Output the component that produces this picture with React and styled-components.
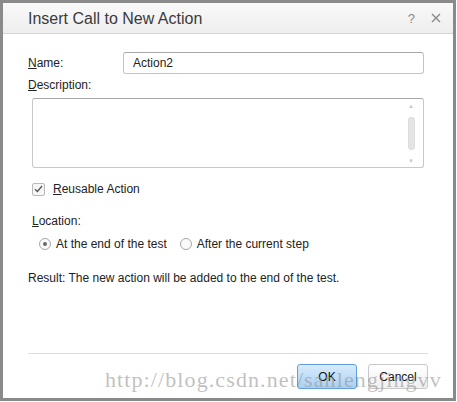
import styled, { createGlobalStyle } from "styled-components";

const Global = createGlobalStyle`
  html, body { margin: 0; padding: 0; background: #ffffff; }
  body { font-family: "Liberation Sans", Arial, sans-serif; font-size: 12px; color: #222; }
`;

const Dialog = styled.div`
  position: relative;
  width: 450px;
  height: 395px;
  border: 3px solid #8a8a8a;
  background: #ffffff;
  display: flex;
  flex-direction: column;
`;

const TitleBar = styled.div`
  height: 30px;
  display: flex;
  align-items: center;
  padding: 0 12px 0 25px;
  background: linear-gradient(#f9f9f9, #eeeeee);
  border-bottom: 1px solid #d4d4d4;
`;

const Title = styled.div`
  flex: 1;
  font-size: 16px;
  color: #3a3a3a;
  padding-top: 1px;
`;

const TitleButton = styled.span`
  display: inline-flex;
  align-items: center;
  color: #8a8a8a;
  font-size: 13px;
  margin-left: 16px;
`;

const Body = styled.div`
  flex: 1;
  display: flex;
  flex-direction: column;
  padding: 18px 29px 0 25px;
`;

const Row = styled.div`
  display: flex;
  align-items: center;
  margin-top: ${(p) => p.$mt || 0}px;
  margin-bottom: ${(p) => p.$mb || 0}px;
  padding-left: ${(p) => p.$indent || 0}px;
`;

const Label = styled.label`
  width: 95px;
  color: #222;
  padding-left: ${(p) => p.$indent || 0}px;
`;

const Input = styled.div`
  flex: 1;
  height: 20px;
  border: 1px solid #c4c4c4;
  border-top-color: #a8a8a8;
  border-radius: 3px;
  display: flex;
  align-items: center;
  padding-left: 9px;
`;

const TextArea = styled.div`
  margin: 6px 0 0 4px;
  height: 68px;
  border: 1px solid #c8c8c8;
  border-top-color: #a8a8a8;
  border-radius: 3px;
  display: flex;
  justify-content: flex-end;
`;

const Scroll = styled.div`
  width: 12px;
  margin-right: 6px;
  display: flex;
  flex-direction: column;
  align-items: center;
  justify-content: space-between;
  padding: 4px 0 3px;
  color: #c8c8c8;
  font-size: 6px;
`;

const Thumb = styled.div`
  width: 5px;
  height: 31px;
  border-radius: 3px;
  background: #e4e4e4;
  border: 1px solid #dcdcdc;
`;

const Check = styled.span`
  width: 11px;
  height: 11px;
  border: 1px solid #b8b8b8;
  border-radius: 2px;
  background: #f6f6f6;
  display: inline-flex;
  align-items: center;
  justify-content: center;
  margin: 0 8px 0 4px;
`;

const Radio = styled.span`
  width: 10px;
  height: 10px;
  border-radius: 50%;
  border: 1px solid #a8a8a8;
  background: #fafafa;
  display: inline-flex;
  align-items: center;
  justify-content: center;
  margin-right: 5px;
  &::after {
    content: "";
    width: 4px;
    height: 4px;
    border-radius: 50%;
    background: ${(p) => (p.$on ? "#666" : "transparent")};
  }
`;

const RadioItem = styled.span`
  display: inline-flex;
  align-items: center;
  margin-right: 13px;
`;

const Footer = styled.div`
  margin: 0 25px 0 25px;
  border-top: 1px solid #dedede;
  padding: 10px 0 9px;
  display: flex;
  justify-content: flex-end;
  gap: 11px;
`;

const Button = styled.button`
  width: 60px;
  height: 25px;
  font-family: "Liberation Sans", Arial, sans-serif;
  font-size: 12px;
  color: #111;
  border-radius: 3px;
  border: 1px solid ${(p) => (p.$primary ? "#5f9fdc" : "#c8c8c8")};
  background: ${(p) =>
    p.$primary ? "linear-gradient(#d8ebfb, #a9d0f3)" : "linear-gradient(#ffffff, #f0f0f0)"};
  padding: 0;
`;

const Watermark = styled.div`
  position: absolute;
  left: 102px;
  top: 364px;
  font-family: "Liberation Serif", "Times New Roman", serif;
  font-size: 22px;
  letter-spacing: 1.1px;
  color: rgba(150, 150, 150, 0.6);
  pointer-events: none;
  white-space: nowrap;
`;

const U = styled.span`
  text-decoration: underline;
`;

export default function App() {
  return (
    <>
      <Global />
      <Dialog>
        <TitleBar>
          <Title>Insert Call to New Action</Title>
          <TitleButton>?</TitleButton>
          <TitleButton>
            <svg width="10" height="10" viewBox="0 0 10 10">
              <path d="M1 1 L9 9 M9 1 L1 9" stroke="#8a8a8a" strokeWidth="1.4" />
            </svg>
          </TitleButton>
        </TitleBar>
        <Body>
          <Row $mb={4}>
            <Label>
              <U>N</U>ame:
            </Label>
            <Input>Action2</Input>
          </Row>
          <Row>
            <Label>
              <U>D</U>escription:
            </Label>
          </Row>
          <TextArea>
            <Scroll>
              <span>▲</span>
              <Thumb />
              <span>▼</span>
            </Scroll>
          </TextArea>
          <Row $mt={14} $mb={18}>
            <Check>
              <svg width="9" height="8" viewBox="0 0 9 8">
                <path d="M1 4.2 L3.4 6.5 L8 1" stroke="#555" strokeWidth="1.3" fill="none" />
              </svg>
            </Check>
            <span>
              <U>R</U>eusable Action
            </span>
          </Row>
          <Row $mb={9}>
            <Label $indent={4}>
              <U>L</U>ocation:
            </Label>
          </Row>
          <Row $mb={20} $indent={11}>
            <RadioItem>
              <Radio $on />
              At the end of the test
            </RadioItem>
            <RadioItem>
              <Radio />
              After the current step
            </RadioItem>
          </Row>
          <Row>Result: The new action will be added to the end of the test.</Row>
        </Body>
        <Footer>
          <Button $primary>OK</Button>
          <Button>Cancel</Button>
        </Footer>
        <Watermark>http://blog.csdn.net/sanlengjingvv</Watermark>
      </Dialog>
    </>
  );
}
